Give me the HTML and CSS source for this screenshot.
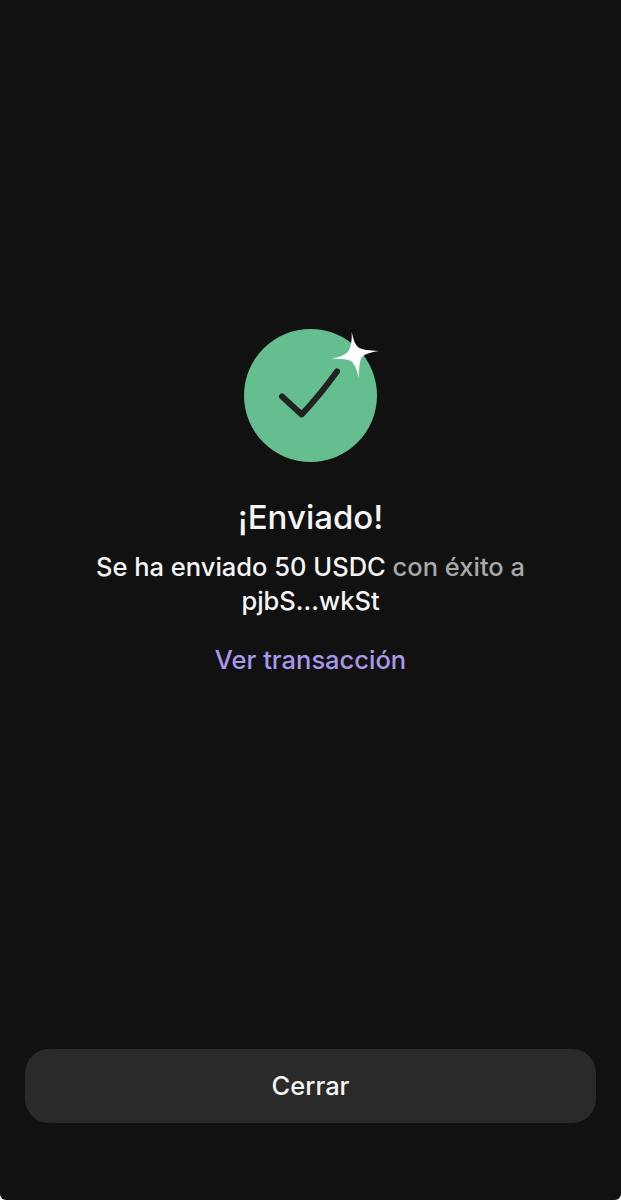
FILE: index.html
```html
<!DOCTYPE html>
<html lang="es">
<head>
  <meta charset="UTF-8" />
  <meta name="viewport" content="width=device-width, initial-scale=1.0"/>
  <title>Enviado</title>
  <link rel="stylesheet" href="styles.css">
</head>
<body>
  <div class="screen">
    <div class="result">
      <svg class="badge" width="140" height="140" viewBox="0 0 140 140">
        <circle cx="66.5" cy="71.5" r="66.5" fill="#64be90"/>
        <path d="M38 72.500 L57.700 90.500 Q76 71 93 47.500" fill="none" stroke="#222" stroke-width="6" stroke-linecap="round" stroke-linejoin="round"/>
        <path d="M107.700 7.700 C109.500 16 111 20.500 114.500 23.500 C118.500 26 125 26.500 135 27 C125 28.500 120 30.500 117.500 33.500 C115.500 38 115 44 115 54 C112.500 45 110.500 40 107 37 C103 34.800 97 34.800 87.700 35 C97 32.500 102 30.500 104.500 27 C107 22.500 108 17 107.700 7.700 Z" fill="#fff"/>
      </svg>
      <h1 class="title">¡Enviado!</h1>
      <p class="message">Se ha enviado 50 USDC <span class="muted">con éxito a</span><br>pjbS...wkSt</p>
      <a class="link" href="#">Ver transacción</a>
    </div>
    <button class="close-btn">Cerrar</button>
  </div>
</body>
</html>
```

FILE: styles.css
```css
html, body {
  margin: 0;
  background: #fff;
}

.screen {
  height: 1200px;
  box-sizing: border-box;
  background: #111;
  border-radius: 0 0 6px 6px;
  padding: 324px 25px 77px;
  display: flex;
  flex-direction: column;
  font-family: Inter, "Liberation Sans", sans-serif;
}

.result {
  flex: 1;
  display: flex;
  flex-direction: column;
  align-items: center;
  text-align: center;
}

.badge {
  display: block;
  margin-left: 7px;
}

.title {
  margin: 33px 0 0;
  font-size: 33px;
  line-height: 40px;
  font-weight: 500;
  color: #f5f5f5;
}

.message {
  margin: 13px 0 0;
  font-size: 25.5px;
  line-height: 34px;
  font-weight: 500;
  color: #f5f5f5;
}

.muted {
  color: #a8a8a8;
}

.link {
  margin-top: 25px;
  font-size: 25.5px;
  line-height: 34px;
  font-weight: 500;
  color: #a897ea;
  text-decoration: none;
}

.close-btn {
  height: 74px;
  padding: 0 0 2px;
  border: none;
  border-radius: 24px;
  background: #2a2a2a;
  color: #f5f5f5;
  font-family: inherit;
  font-size: 25.5px;
  font-weight: 500;
  cursor: pointer;
}
```
